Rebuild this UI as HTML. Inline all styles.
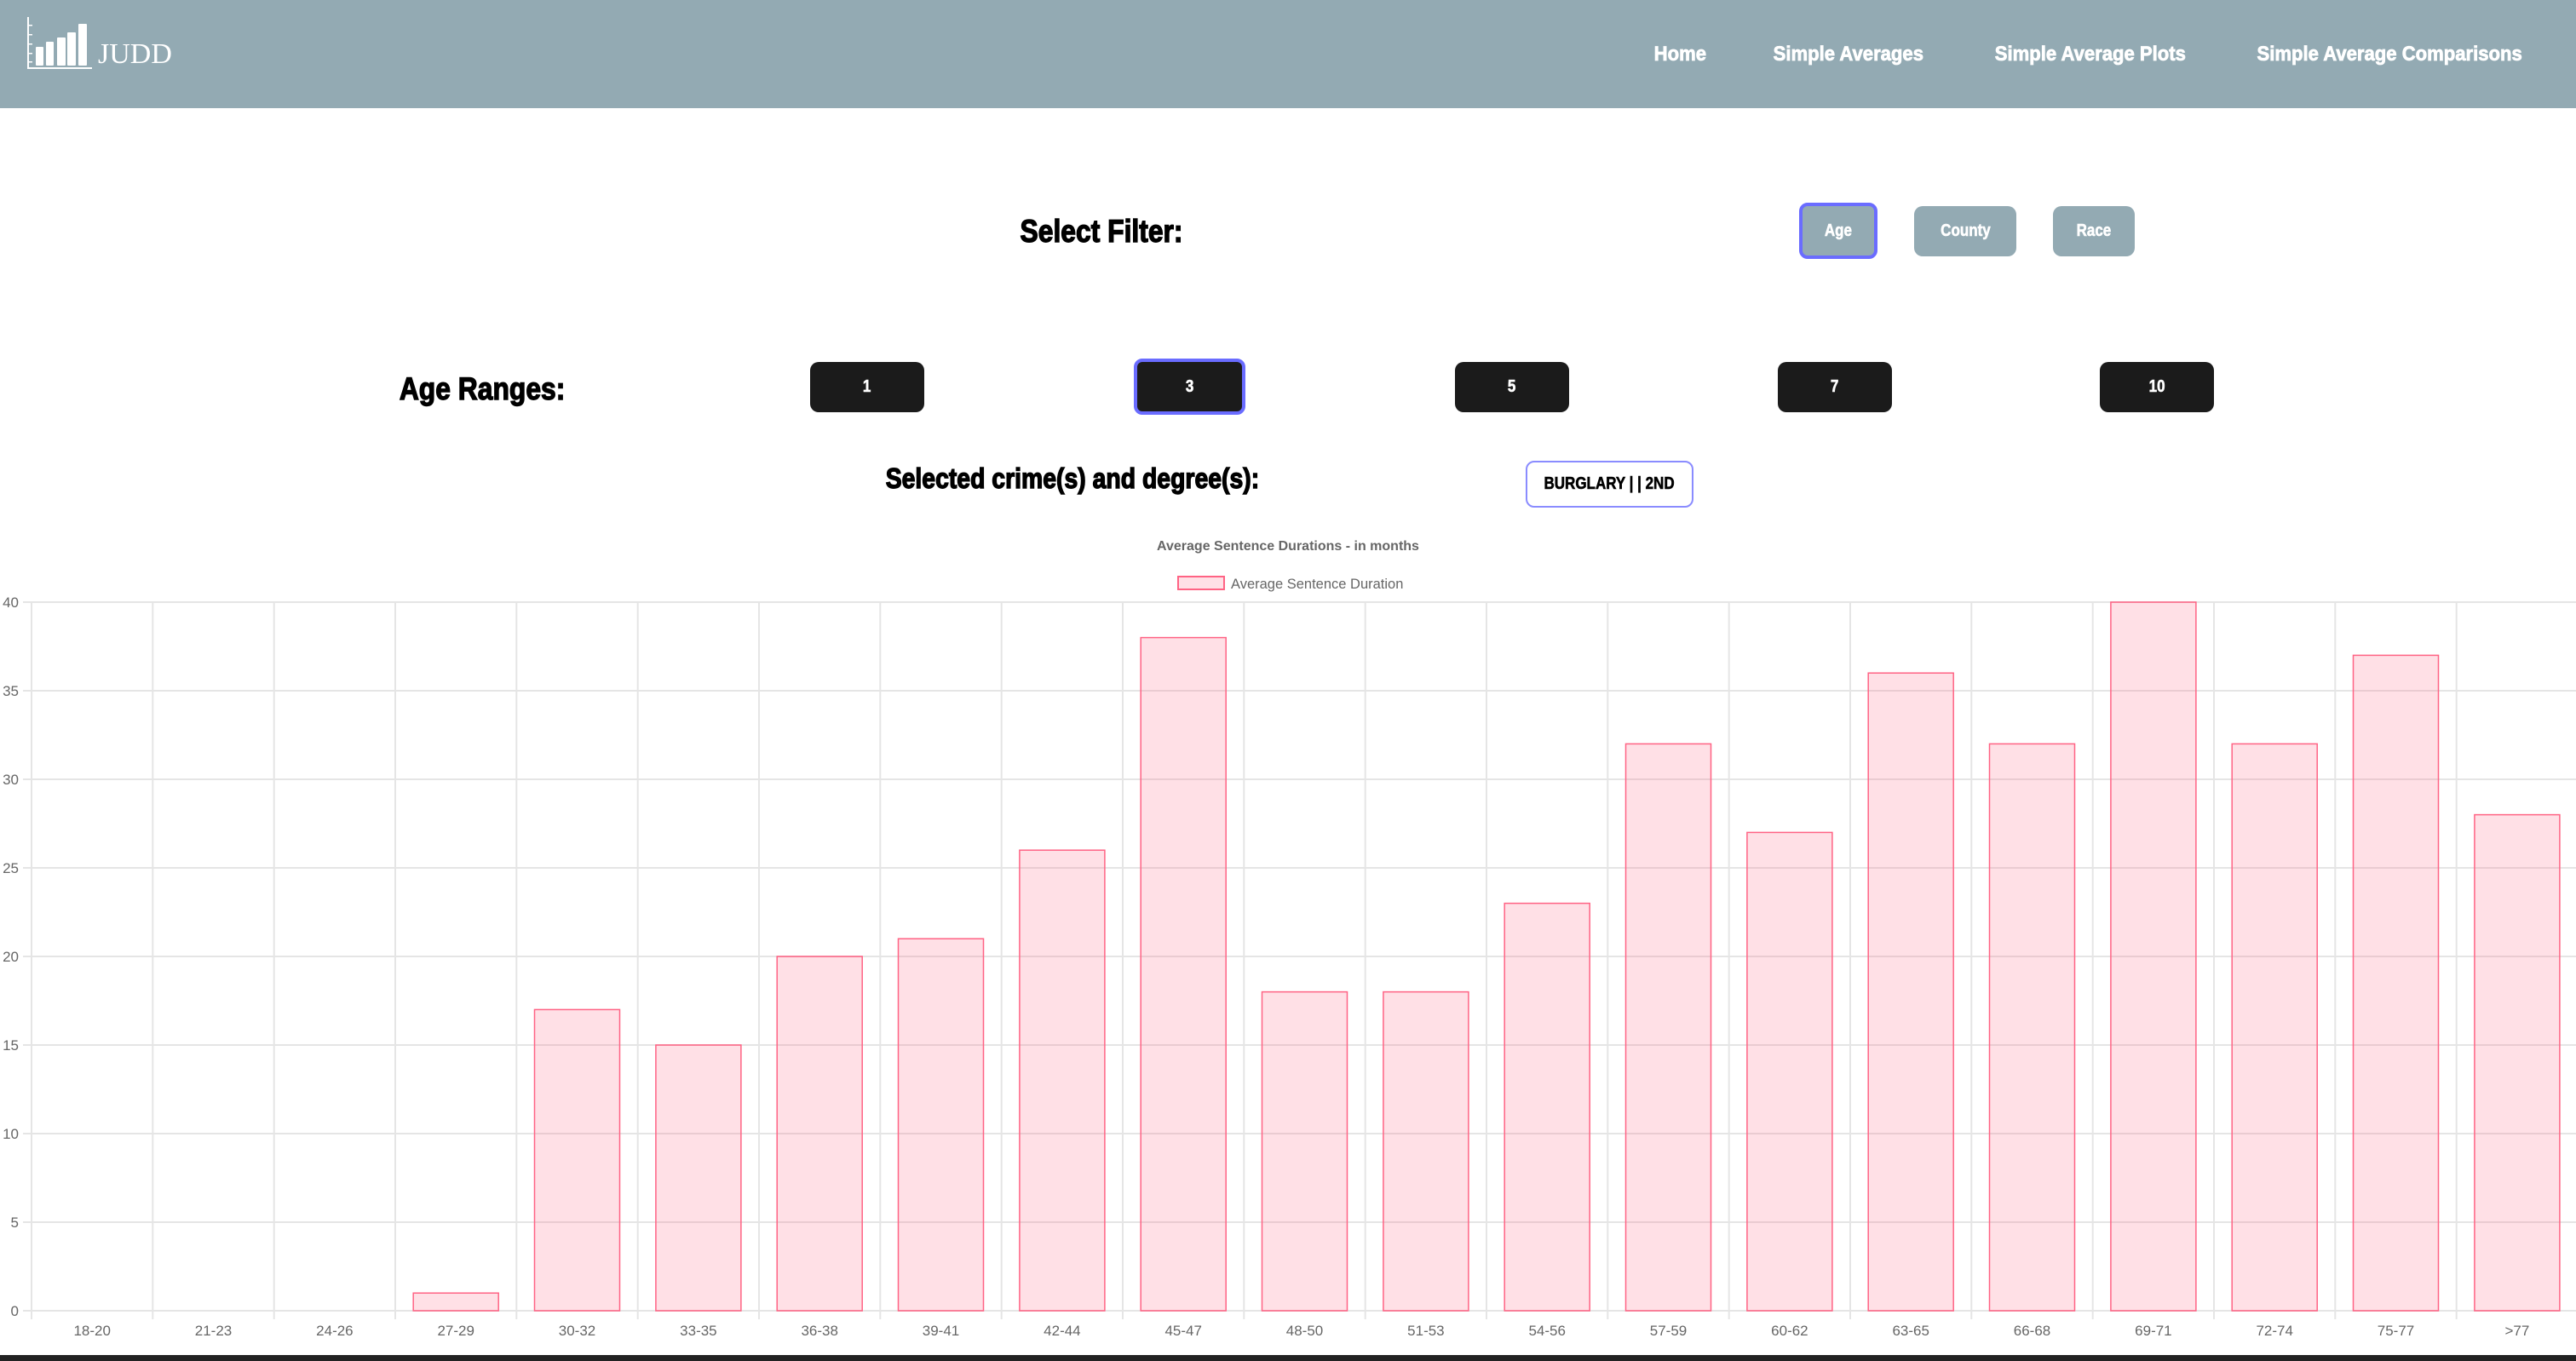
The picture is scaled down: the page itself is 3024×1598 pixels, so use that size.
<!DOCTYPE html>
<html><head><meta charset="utf-8"><style>
html,body{margin:0;padding:0;width:3024px;height:1598px;overflow:hidden;background:#fff;font-family:"Liberation Sans",sans-serif}
.hdr{position:absolute;left:0;top:0;width:3024px;height:127px;background:#93aab3}
.t{position:absolute;white-space:nowrap;text-align:center;font-weight:bold}
.t span{display:inline-block}
.nav{color:#fff;font-size:24px;top:49px;height:30px;line-height:30px;-webkit-text-stroke:0.8px #fff}
.nav span{transform:scaleX(0.92)}
.h{color:#000;font-size:37px;height:44px;line-height:44px;-webkit-text-stroke:1.4px #000}
.h span{transform:scaleX(0.86)}
.b{position:absolute;box-sizing:border-box;border-radius:10px;color:#fff;font-weight:bold;display:flex;align-items:center;justify-content:center;font-size:20px;-webkit-text-stroke:0.6px currentColor}
.b span{display:inline-block;transform:scaleX(0.85)}
.g{background:#93aab3}
.k{background:#1b1b1b}
.sel{border:4px solid #6a6cff}
</style></head><body>
<div class="hdr">
<svg width="220" height="127" style="position:absolute;left:0;top:0">
<g fill="#fff">
<rect x="32" y="20" width="2" height="61"/>
<rect x="32" y="79" width="76" height="2"/>
<rect x="34" y="29" width="4" height="1.5"/><rect x="34" y="40" width="4" height="1.5"/><rect x="34" y="51" width="4" height="1.5"/><rect x="34" y="62" width="4" height="1.5"/><rect x="34" y="72" width="4" height="1.5"/>
<rect x="42" y="55" width="9" height="22" rx="1"/>
<rect x="54" y="49" width="9" height="28" rx="1"/>
<rect x="67" y="44" width="10" height="33" rx="1"/>
<rect x="79" y="38" width="10" height="39" rx="1"/>
<rect x="92" y="28" width="10" height="49" rx="1"/>
</g>
<text x="115" y="74" fill="#fff" font-family="Liberation Serif" font-size="34">JUDD</text>
</svg>
<div class="t nav" style="left:1922px;width:100px"><span>Home</span></div>
<div class="t nav" style="left:2070px;width:200px"><span>Simple Averages</span></div>
<div class="t nav" style="left:2324px;width:260px"><span>Simple Average Plots</span></div>
<div class="t nav" style="left:2625px;width:360px"><span>Simple Average Comparisons</span></div>
</div>

<div class="t h" style="left:1093px;width:400px;top:250px"><span>Select Filter:</span></div>
<div class="b g sel" style="left:2112px;top:238px;width:92px;height:66px"><span>Age</span></div>
<div class="b g" style="left:2247px;top:242px;width:120px;height:59px"><span>County</span></div>
<div class="b g" style="left:2410px;top:242px;width:96px;height:59px"><span>Race</span></div>

<div class="t h" style="left:366px;width:400px;top:435px"><span>Age Ranges:</span></div>
<div class="b k" style="left:951px;top:425px;width:134px;height:59px"><span>1</span></div>
<div class="b k sel" style="left:1331px;top:421px;width:131px;height:66px"><span>3</span></div>
<div class="b k" style="left:1708px;top:425px;width:134px;height:59px"><span>5</span></div>
<div class="b k" style="left:2087px;top:425px;width:134px;height:59px"><span>7</span></div>
<div class="b k" style="left:2465px;top:425px;width:134px;height:59px"><span>10</span></div>

<div class="t h" style="left:959px;width:600px;top:540px;font-size:33px"><span>Selected crime(s) and degree(s):</span></div>
<div class="b" style="left:1791px;top:541px;width:197px;height:55px;border:2px solid #8a8cff;color:#000;font-size:20px"><span>BURGLARY | | 2ND</span></div>

<svg width="3024" height="1598" style="position:absolute;left:0;top:0" font-family="Liberation Sans">
<text x="1512" y="646" text-anchor="middle" font-size="16" font-weight="bold" fill="#666">Average Sentence Durations - in months</text>
<rect x="1383" y="677" width="54" height="15" fill="rgba(255,99,132,0.2)" stroke="#ff6384" stroke-width="2"/>
<text x="1445" y="691" font-size="16.5" fill="#666">Average Sentence Duration</text>
<g stroke="#e5e5e5" stroke-width="2">
<line x1="27" x2="3024" y1="707" y2="707"/><line x1="27" x2="3024" y1="811" y2="811"/><line x1="27" x2="3024" y1="915" y2="915"/><line x1="27" x2="3024" y1="1019" y2="1019"/><line x1="27" x2="3024" y1="1123" y2="1123"/><line x1="27" x2="3024" y1="1227" y2="1227"/><line x1="27" x2="3024" y1="1331" y2="1331"/><line x1="27" x2="3024" y1="1435" y2="1435"/><line x1="27" x2="3024" y1="1539" y2="1539"/>
<line x1="37" x2="37" y1="707" y2="1549"/><line x1="179.3" x2="179.3" y1="707" y2="1549"/><line x1="321.7" x2="321.7" y1="707" y2="1549"/><line x1="464" x2="464" y1="707" y2="1549"/><line x1="606.3" x2="606.3" y1="707" y2="1549"/><line x1="748.7" x2="748.7" y1="707" y2="1549"/><line x1="891" x2="891" y1="707" y2="1549"/><line x1="1033.3" x2="1033.3" y1="707" y2="1549"/><line x1="1175.7" x2="1175.7" y1="707" y2="1549"/><line x1="1318" x2="1318" y1="707" y2="1549"/><line x1="1460.3" x2="1460.3" y1="707" y2="1549"/><line x1="1602.7" x2="1602.7" y1="707" y2="1549"/><line x1="1745" x2="1745" y1="707" y2="1549"/><line x1="1887.3" x2="1887.3" y1="707" y2="1549"/><line x1="2029.7" x2="2029.7" y1="707" y2="1549"/><line x1="2172" x2="2172" y1="707" y2="1549"/><line x1="2314.3" x2="2314.3" y1="707" y2="1549"/><line x1="2456.7" x2="2456.7" y1="707" y2="1549"/><line x1="2599" x2="2599" y1="707" y2="1549"/><line x1="2741.3" x2="2741.3" y1="707" y2="1549"/><line x1="2883.7" x2="2883.7" y1="707" y2="1549"/>
</g>
<g fill="#666" font-size="17" text-anchor="end">
<text x="22" y="713">40</text><text x="22" y="817">35</text><text x="22" y="921">30</text><text x="22" y="1025">25</text><text x="22" y="1129">20</text><text x="22" y="1233">15</text><text x="22" y="1337">10</text><text x="22" y="1441">5</text><text x="22" y="1545">0</text>
</g>
<g fill="rgba(255,99,132,0.2)" stroke="#ff6384" stroke-width="1.5">
<rect x="485.2" y="1518.2" width="100" height="20.8"/>
<rect x="627.5" y="1185.4" width="100" height="353.6"/>
<rect x="769.9" y="1227" width="100" height="312"/>
<rect x="912.2" y="1123" width="100" height="416"/>
<rect x="1054.5" y="1102.2" width="100" height="436.8"/>
<rect x="1196.9" y="998.2" width="100" height="540.8"/>
<rect x="1339.2" y="748.6" width="100" height="790.4"/>
<rect x="1481.5" y="1164.6" width="100" height="374.4"/>
<rect x="1623.9" y="1164.6" width="100" height="374.4"/>
<rect x="1766.2" y="1060.6" width="100" height="478.4"/>
<rect x="1908.5" y="873.4" width="100" height="665.6"/>
<rect x="2050.9" y="977.4" width="100" height="561.6"/>
<rect x="2193.2" y="790.2" width="100" height="748.8"/>
<rect x="2335.5" y="873.4" width="100" height="665.6"/>
<rect x="2477.9" y="707" width="100" height="832"/>
<rect x="2620.2" y="873.4" width="100" height="665.6"/>
<rect x="2762.5" y="769.4" width="100" height="769.6"/>
<rect x="2904.9" y="956.6" width="100" height="582.4"/>
</g>
<g fill="#666" font-size="17" text-anchor="middle">
<text x="108.2" y="1568">18-20</text><text x="250.5" y="1568">21-23</text><text x="392.9" y="1568">24-26</text><text x="535.2" y="1568">27-29</text><text x="677.5" y="1568">30-32</text><text x="819.9" y="1568">33-35</text><text x="962.2" y="1568">36-38</text><text x="1104.5" y="1568">39-41</text><text x="1246.9" y="1568">42-44</text><text x="1389.2" y="1568">45-47</text><text x="1531.5" y="1568">48-50</text><text x="1673.9" y="1568">51-53</text><text x="1816.2" y="1568">54-56</text><text x="1958.5" y="1568">57-59</text><text x="2100.9" y="1568">60-62</text><text x="2243.2" y="1568">63-65</text><text x="2385.5" y="1568">66-68</text><text x="2527.9" y="1568">69-71</text><text x="2670.2" y="1568">72-74</text><text x="2812.5" y="1568">75-77</text><text x="2954.9" y="1568">&gt;77</text>
</g>
<rect x="0" y="1591" width="3024" height="7" fill="#222"/>
</svg>
</body></html>
